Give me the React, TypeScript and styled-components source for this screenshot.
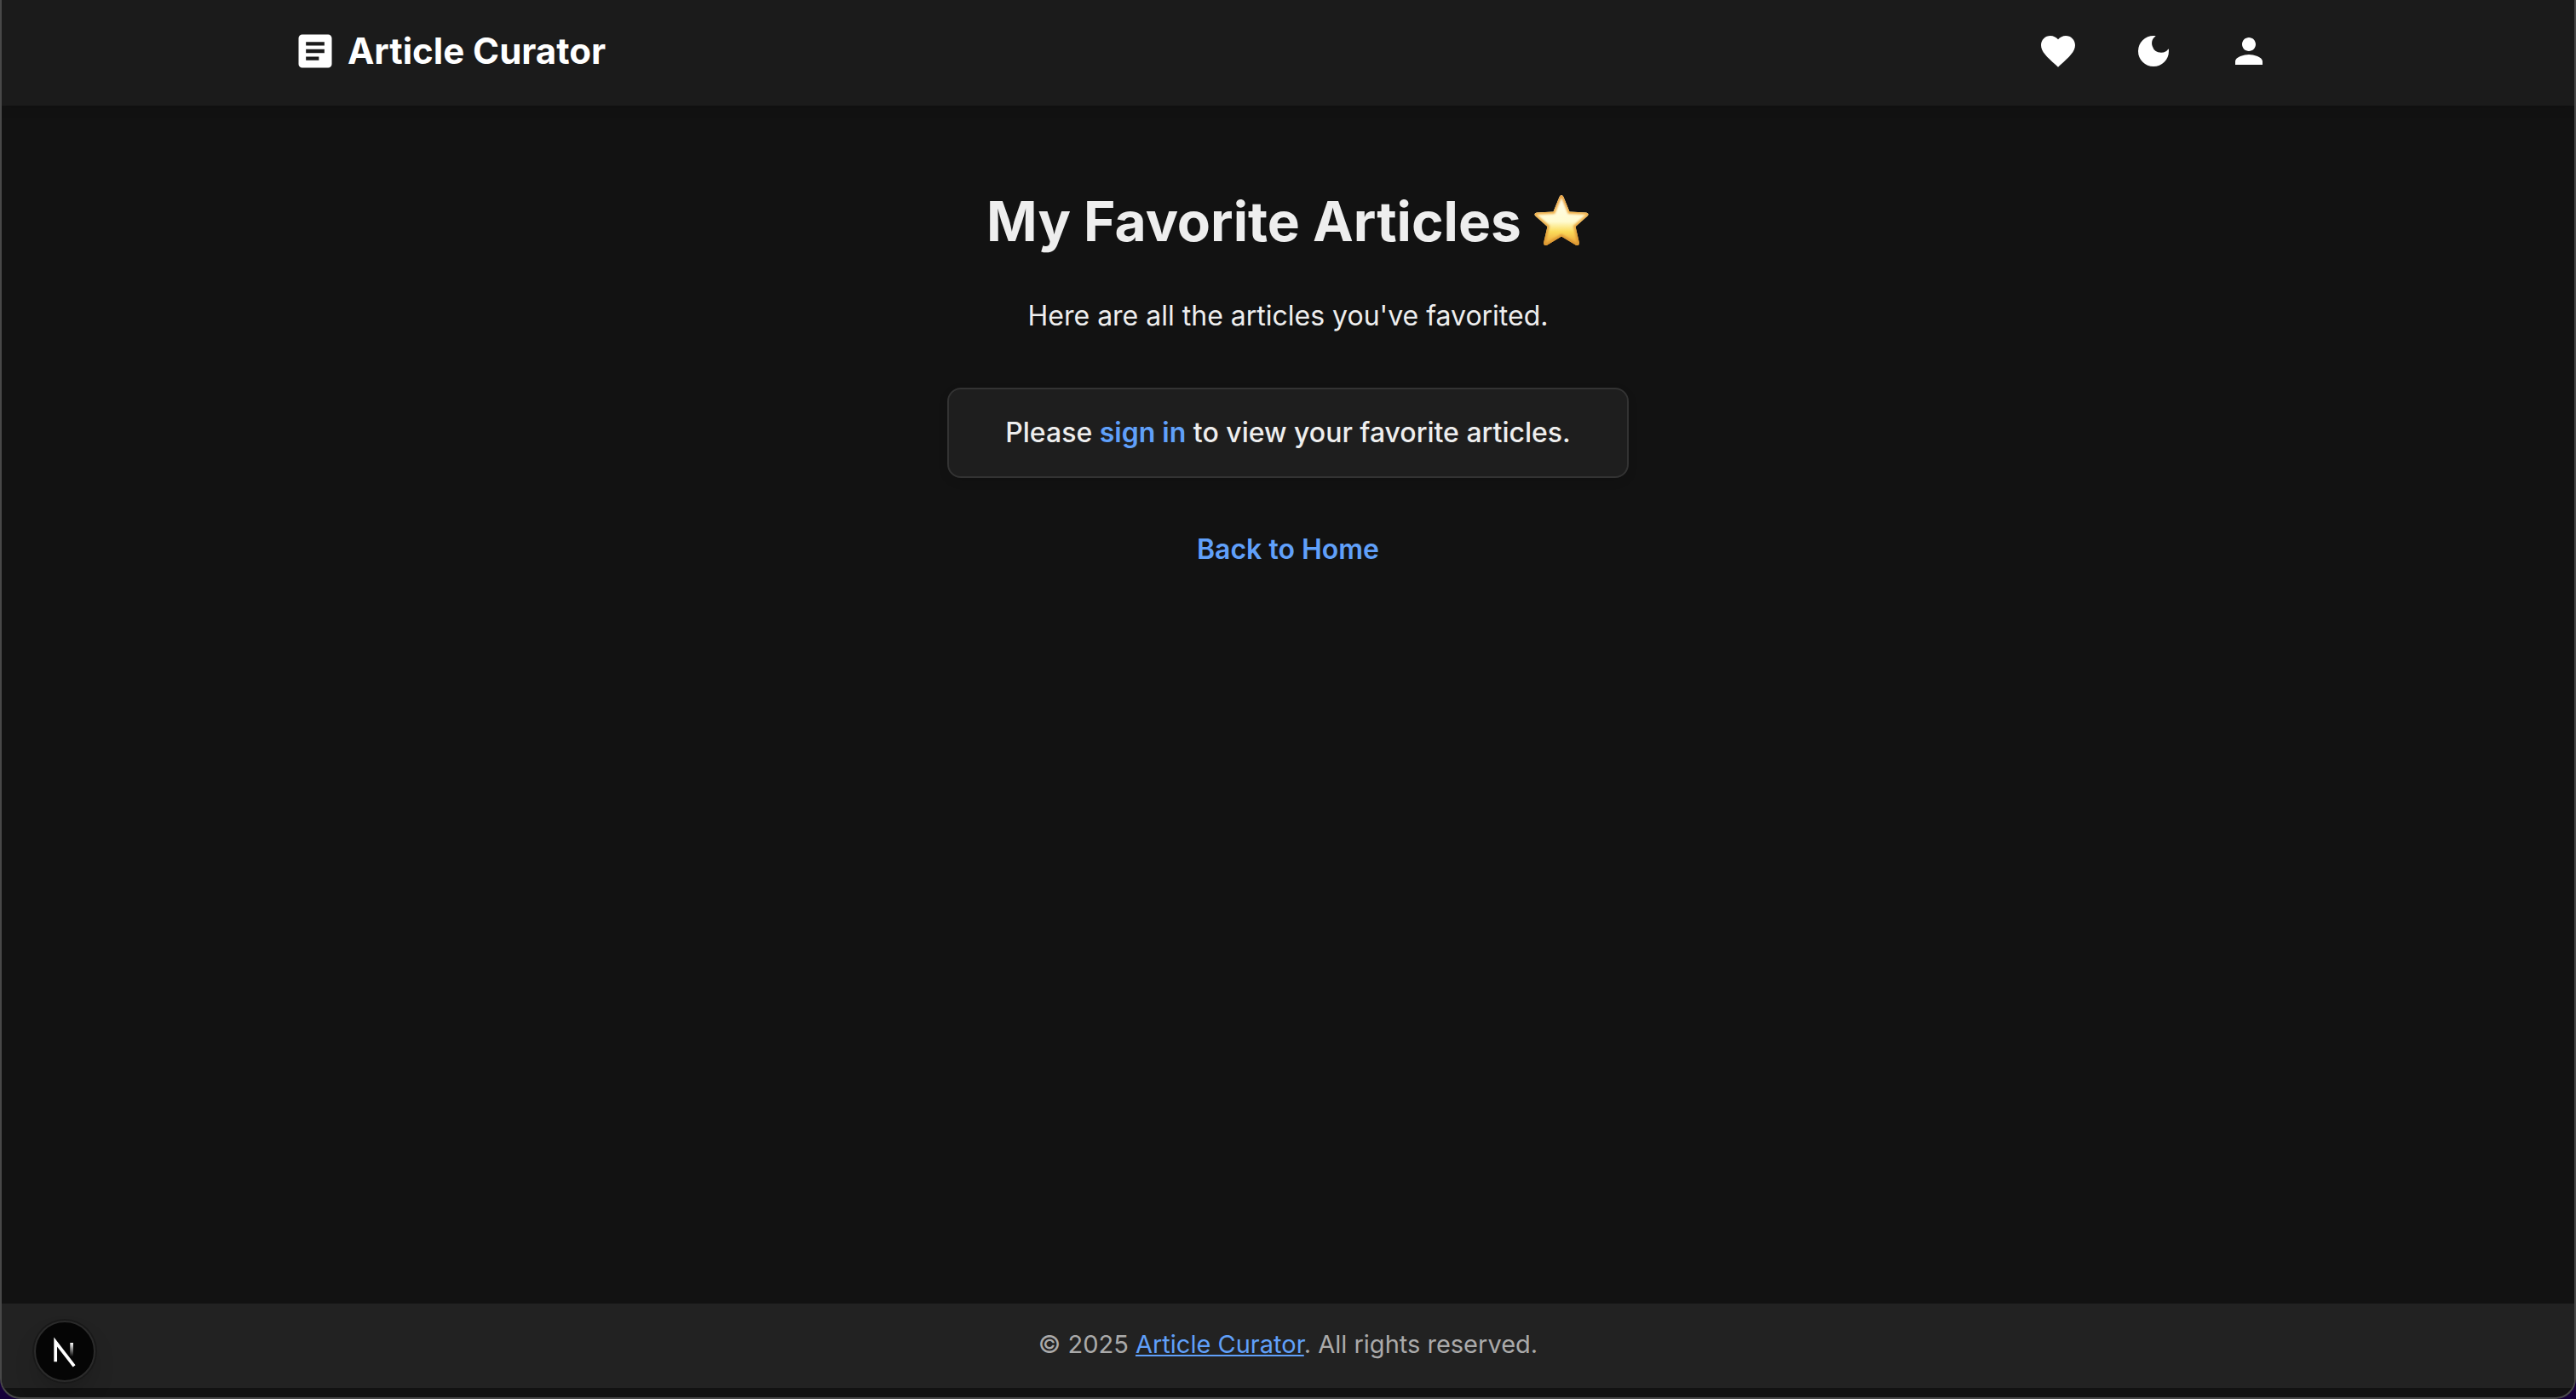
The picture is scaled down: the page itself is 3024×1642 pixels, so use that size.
import React from "react";
import styled, { createGlobalStyle } from "styled-components";
import { MdArticle, MdFavorite, MdDarkMode, MdPerson } from "react-icons/md";

const GlobalStyle = createGlobalStyle`
  *, *::before, *::after { box-sizing: border-box; }
  body {
    margin: 0;
    background: #16003a;
    color: #eeeeee;
    font-family: Inter, "Liberation Sans", sans-serif;
    -webkit-font-smoothing: antialiased;
  }
`;

const Page = styled.div`
  min-height: 100vh;
  display: flex;
  flex-direction: column;
  padding-bottom: 11px;
  background: #121212;
  border: 2px solid #484848;
  border-top: 0;
  border-radius: 0 0 24px 24px;
  overflow: hidden;
`;

const Header = styled.header`
  background: #1b1b1b;
  box-shadow: 0 4px 12px rgba(0, 0, 0, 0.1);
`;

const HeaderInner = styled.div`
  max-width: 2400px;
  margin: 0 auto;
  padding: 20px 32px 24px;
  display: flex;
  align-items: center;
  justify-content: space-between;
`;

const Brand = styled.a`
  display: flex;
  align-items: center;
  gap: 12px;
  color: #ffffff;
  font-size: 42px;
  font-weight: 700;
  line-height: 52px;
  text-decoration: none;
`;

const Nav = styled.nav`
  display: flex;
  gap: 32px;
`;

const IconButton = styled.button`
  display: flex;
  padding: 16px;
  border: 0;
  border-radius: 50%;
  background: transparent;
  color: #ffffff;
  cursor: pointer;
`;

const Main = styled.main`
  flex: 1;
  display: flex;
  flex-direction: column;
  align-items: center;
  padding: 96px 32px;
  font-size: 32px;
  line-height: 48px;
  text-align: center;
`;

const Title = styled.h1`
  display: flex;
  align-items: center;
  gap: 14px;
  margin: 0 0 47px;
  font-size: 64px;
  font-weight: 700;
  line-height: 80px;
`;

const Lead = styled.p`
  margin: 0 0 60px;
`;

const Notice = styled.p`
  width: 100%;
  max-width: 800px;
  margin: 0 0 60px;
  padding: 27px 32px;
  border: 2px solid #333333;
  border-radius: 16px;
  background: #1e1e1e;
  box-shadow: 0 4px 12px rgba(0, 0, 0, 0.1);
  font-weight: 500;
`;

const TextLink = styled.a`
  color: #60a0fa;
  font-weight: 600;
  text-decoration: none;
`;

const Footer = styled.footer`
  padding: 28px 32px 31px;
  background: #222222;
  color: #aaaaaa;
  font-size: 29px;
  line-height: 40px;
  text-align: center;
`;

const FooterLink = styled.a`
  color: #60a0fa;
`;

const DevBadge = styled.button`
  position: fixed;
  left: 40px;
  bottom: 20px;
  width: 72px;
  height: 72px;
  padding: 0;
  border: 2px solid #2b2b2b;
  border-radius: 50%;
  background: #050505;
  box-shadow: 0 0 0 2px #191919, 0 16px 32px -8px rgba(0, 0, 0, 0.24);
  cursor: pointer;
`;

const STAR_PATH =
  "M30.6 4Q33 0 35.4 4L42.5 21.5L62 22.5Q66.5 23.5 63 27L49.5 39L53.8 57.5Q54 62.5 49.5 60.5L33 50.5L16.5 60.5Q12 62.5 12.2 57.5L16.5 39L3 27Q-0.5 23.5 4 22.5L23.5 21.5Z";

function Star() {
  return (
    <svg width="66" height="66" viewBox="0 0 66 66" role="img" aria-label="star">
      <defs>
        <linearGradient id="starFill" x1="0" y1="0" x2="0" y2="1">
          <stop offset="0" stopColor="#fffdf0" />
          <stop offset="0.5" stopColor="#fffbd0" />
          <stop offset="0.68" stopColor="#fbdc5a" />
          <stop offset="0.85" stopColor="#f0b040" />
          <stop offset="1" stopColor="#e0a030" />
        </linearGradient>
        <linearGradient id="starEdge" x1="0" y1="0" x2="0" y2="1">
          <stop offset="0" stopColor="#e8a040" />
          <stop offset="0.4" stopColor="#f2b550" />
          <stop offset="1" stopColor="#d99530" />
        </linearGradient>
        <filter id="starSoft" x="-10%" y="-10%" width="120%" height="120%">
          <feGaussianBlur stdDeviation="1" />
        </filter>
        <clipPath id="starClip">
          <path d={STAR_PATH} />
        </clipPath>
      </defs>
      <g clipPath="url(#starClip)">
        <rect width="66" height="66" fill="url(#starFill)" />
        <path
          d={STAR_PATH}
          fill="none"
          stroke="url(#starEdge)"
          strokeWidth="5"
          filter="url(#starSoft)"
        />
      </g>
    </svg>
  );
}

function NextMark() {
  return (
    <svg width="68" height="68" viewBox="1 1 34 34" fill="none" aria-hidden="true">
      <defs>
        <linearGradient id="diag" x1="9.95" y1="11.1" x2="15.16" y2="17.9" gradientUnits="userSpaceOnUse">
          <stop stopColor="#fff" />
          <stop offset="0.604" stopColor="#fff" />
          <stop offset="1" stopColor="#fff" stopOpacity="0" />
        </linearGradient>
        <linearGradient id="bar" x1="11.82" y1="1.4" x2="11.79" y2="9.63" gradientUnits="userSpaceOnUse">
          <stop stopColor="#fff" />
          <stop offset="1" stopColor="#fff" stopOpacity="0" />
        </linearGradient>
      </defs>
      <g transform="translate(10.25 11.5)" strokeWidth="1.86">
        <path d="M13.3 15.2L2.34 1V12.6" stroke="url(#diag)" />
        <path d="M11.825 1.5V13.1" stroke="url(#bar)" />
      </g>
    </svg>
  );
}

export default function App() {
  return (
    <>
      <GlobalStyle />
      <Page>
        <Header>
          <HeaderInner>
            <Brand href="#home">
              <MdArticle size={52} aria-hidden="true" />
              Article Curator
            </Brand>
            <Nav aria-label="Main">
              <IconButton type="button" aria-label="Favorites">
                <MdFavorite size={48} />
              </IconButton>
              <IconButton type="button" aria-label="Toggle theme">
                <MdDarkMode size={48} />
              </IconButton>
              <IconButton type="button" aria-label="Account">
                <MdPerson size={48} />
              </IconButton>
            </Nav>
          </HeaderInner>
        </Header>
        <Main>
          <Title>
            My Favorite Articles
            <Star />
          </Title>
          <Lead>Here are all the articles you've favorited.</Lead>
          <Notice>
            Please <TextLink href="#sign-in">sign in</TextLink> to view your favorite articles.
          </Notice>
          <TextLink href="#home">Back to Home</TextLink>
        </Main>
        <Footer>
          © 2025 <FooterLink href="#home">Article Curator</FooterLink>. All rights reserved.
        </Footer>
      </Page>
      <DevBadge type="button" aria-label="Open developer tools">
        <NextMark />
      </DevBadge>
    </>
  );
}
